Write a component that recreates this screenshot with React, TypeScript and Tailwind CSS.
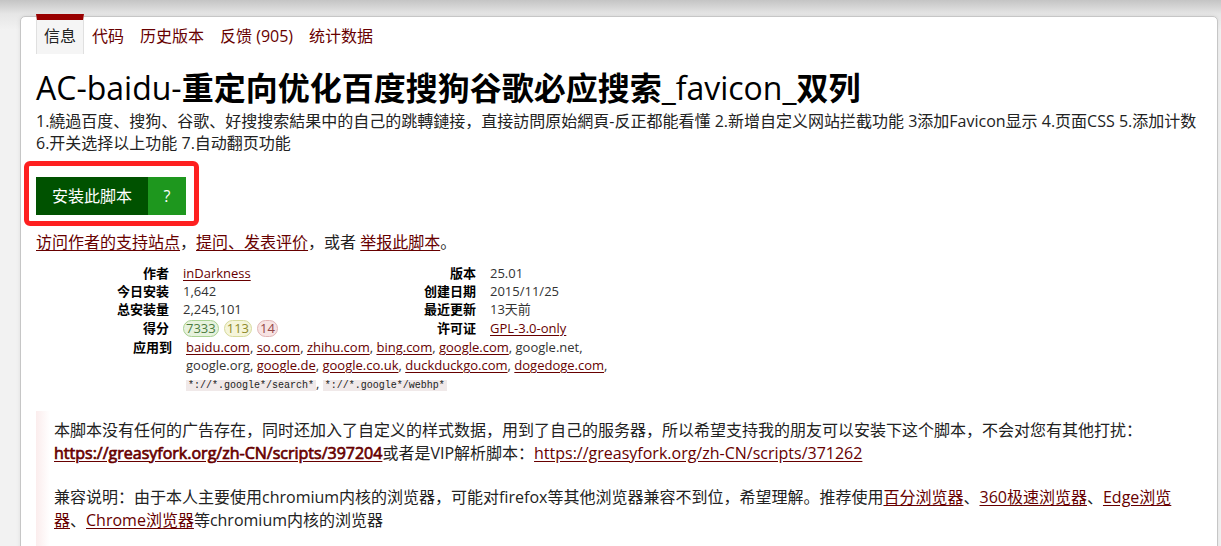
import React from 'react';

const FONT = '"Open Sans", "Noto Sans CJK SC", sans-serif';

const tabs = [
  { label: '信息', active: true },
  { label: '代码' },
  { label: '历史版本' },
  { label: '反馈 (905)' },
  { label: '统计数据' },
];

function A({ children, bold }: { children: React.ReactNode; bold?: boolean }) {
  return (
    <a
      href="#"
      className={`text-[#670000] underline underline-offset-2 ${bold ? '[-webkit-text-stroke:0.7px_#670000]' : ''}`}
    >
      {children}
    </a>
  );
}

function Code({ children }: { children: React.ReactNode }) {
  return (
    <code
      className="bg-[#f0e9e9] px-[2px] text-[10px] text-[#222]"
      style={{ fontFamily: '"Liberation Mono", "Noto Sans CJK SC", monospace' }}
    >
      {children}
    </code>
  );
}

function Pill({ n, tone }: { n: string; tone: 'good' | 'ok' | 'bad' }) {
  const cls =
    tone === 'good'
      ? 'bg-[#e7f2de] border-[#a9d191] text-[#4c7d3f]'
      : tone === 'ok'
        ? 'bg-[#f5f5da] border-[#d6da9c] text-[#8f8a2a]'
        : 'bg-[#f7e3e3] border-[#e2b5b5] text-[#934848]';
  return (
    <span className={`inline-block rounded-full border px-[2px] leading-[15px] ${cls}`}>{n}</span>
  );
}

export default function App() {
  const leftStats: [string, React.ReactNode][] = [
    ['作者', <A>inDarkness</A>],
    ['今日安装', '1,642'],
    ['总安装量', '2,245,101'],
    [
      '得分',
      <span className="flex items-center gap-[5px]">
        <Pill n="7333" tone="good" />
        <Pill n="113" tone="ok" />
        <Pill n="14" tone="bad" />
      </span>,
    ],
  ];
  const rightStats: [string, React.ReactNode][] = [
    ['版本', '25.01'],
    ['创建日期', '2015/11/25'],
    ['最近更新', '13天前'],
    ['许可证', <A>GPL-3.0-only</A>],
  ];

  return (
    <div
      className="min-h-[546px] overflow-hidden bg-[linear-gradient(to_bottom,#c4c4c4_0px,#e6e6e6_14px,#f2f2f2_30px)] pt-[16px] pl-[20px] pr-[3px] text-[#222]"
      style={{ fontFamily: FONT }}
    >
      <div className="min-h-[540px] rounded-t-[5px] border border-[#c6c6c6] bg-white px-[15px] shadow-[0_0_4px_rgba(0,0,0,0.08)]">
        {/* tabs */}
        <ul className="-mt-[3px] flex text-[16px]">
          {tabs.map((t) =>
            t.active ? (
              <li
                key={t.label}
                className="flex h-[40px] items-center border-x border-t-[6px] border-x-[#e0e0e0] border-t-[#990000] bg-[#f5f5f5] px-[7px] pb-[3px] text-[#222]"
              >
                {t.label}
              </li>
            ) : (
              <li key={t.label} className="flex h-[40px] items-center px-2 pt-[6px] pb-[3px] text-[#670000]">
                {t.label}
              </li>
            ),
          )}
        </ul>

        {/* header */}
        <h2 className="mt-[15px] text-[32px] font-bold leading-[38px] text-black">
          <span className="font-normal">AC-baidu-</span>重定向优化百度搜狗谷歌必应搜索
          <span className="font-normal">_favicon_</span>双列
        </h2>
        <p className="mt-[3px] text-[16px] leading-[22px]">
          1.繞過百度、搜狗、谷歌、好搜搜索結果中的自己的跳轉鏈接，直接訪問原始網頁-反正都能看懂 2.新增自定义网站拦截功能
          3添加Favicon显示 4.页面CSS 5.添加计数 6.开关选择以上功能 7.自动翻页功能
        </p>

        {/* install */}
        <div className="relative mt-[23px] flex w-fit text-[16px] leading-[22px] text-white">
          <a href="#" className="bg-[#005200] px-4 py-2">
            安装此脚本
          </a>
          <a href="#" className="flex w-[38px] items-center justify-center bg-[#1e971e] py-2">
            ?
          </a>
          <div className="pointer-events-none absolute -top-[16px] -right-[13px] -bottom-[11px] -left-[12px] rounded-[6px] border-[5px] border-[#fe2020]" />
        </div>

        <p className="mt-[16px] text-[16px] leading-[22px]">
          <A>访问作者的支持站点</A>，<A>提问、发表评价</A>，或者 <A>举报此脚本</A>。
        </p>

        {/* stats */}
        <div className="mt-[11px] text-[13px] leading-[18px]">
          <div className="grid grid-cols-[133px_146px_133px_1fr] gap-x-[14px]">
            {leftStats.map(([k, v], i) => (
              <React.Fragment key={k}>
                <dt className={`text-right font-bold text-black ${i === 3 ? 'h-[20px] leading-[20px]' : ''}`}>{k}</dt>
                <dd className={`${i === 3 ? 'flex h-[20px] items-center' : ''} text-[#333]`}>{v}</dd>
                <dt className={`text-right font-bold text-black ${i === 3 ? 'h-[20px] leading-[20px]' : ''}`}>
                  {rightStats[i][0]}
                </dt>
                <dd className={`${i === 3 ? 'flex h-[20px] items-center' : ''} text-[#333]`}>{rightStats[i][1]}</dd>
              </React.Fragment>
            ))}
          </div>
          <div className="flex gap-x-[14px]">
            <dt className="w-[136px] shrink-0 text-right font-bold text-black">应用到</dt>
            <dd className="w-[440px] text-[#333]">
              <A>baidu.com</A>, <A>so.com</A>, <A>zhihu.com</A>, <A>bing.com</A>, <A>google.com</A>, google.net,
              google.org, <A>google.de</A>, <A>google.co.uk</A>, <A>duckduckgo.com</A>, <A>dogedoge.com</A>,{' '}
              <br />
              <Code>*://*.google*/search*</Code>, <Code>*://*.google*/webhp*</Code>
            </dd>
          </div>
        </div>

        {/* additional info */}
        <div className="mt-[16px] min-h-[140px] bg-[linear-gradient(to_right,#fbeded_0px,#ffffff_14px)] pt-[8px] pl-[18px] pr-[16px] text-[16px] leading-[22.5px]">
          <p>
            本脚本没有任何的广告存在，同时还加入了自定义的样式数据，用到了自己的服务器，所以希望支持我的朋友可以安装下这个脚本，不会对您有其他打扰：
            <A bold>https://greasyfork.org/zh-CN/scripts/397204</A>或者是VIP解析脚本：
            <A>https://greasyfork.org/zh-CN/scripts/371262</A>
          </p>
          <p className="mt-[22px] break-all">
            兼容说明：由于本人主要使用chromium内核的浏览器，可能对firefox等其他浏览器兼容不到位，希望理解。推荐使用
            <A>百分浏览器</A>、<A>360极速浏览器</A>、<A>Edge浏览器</A>、<A>Chrome浏览器</A>等chromium内核的浏览器
          </p>
        </div>
      </div>
    </div>
  );
}
